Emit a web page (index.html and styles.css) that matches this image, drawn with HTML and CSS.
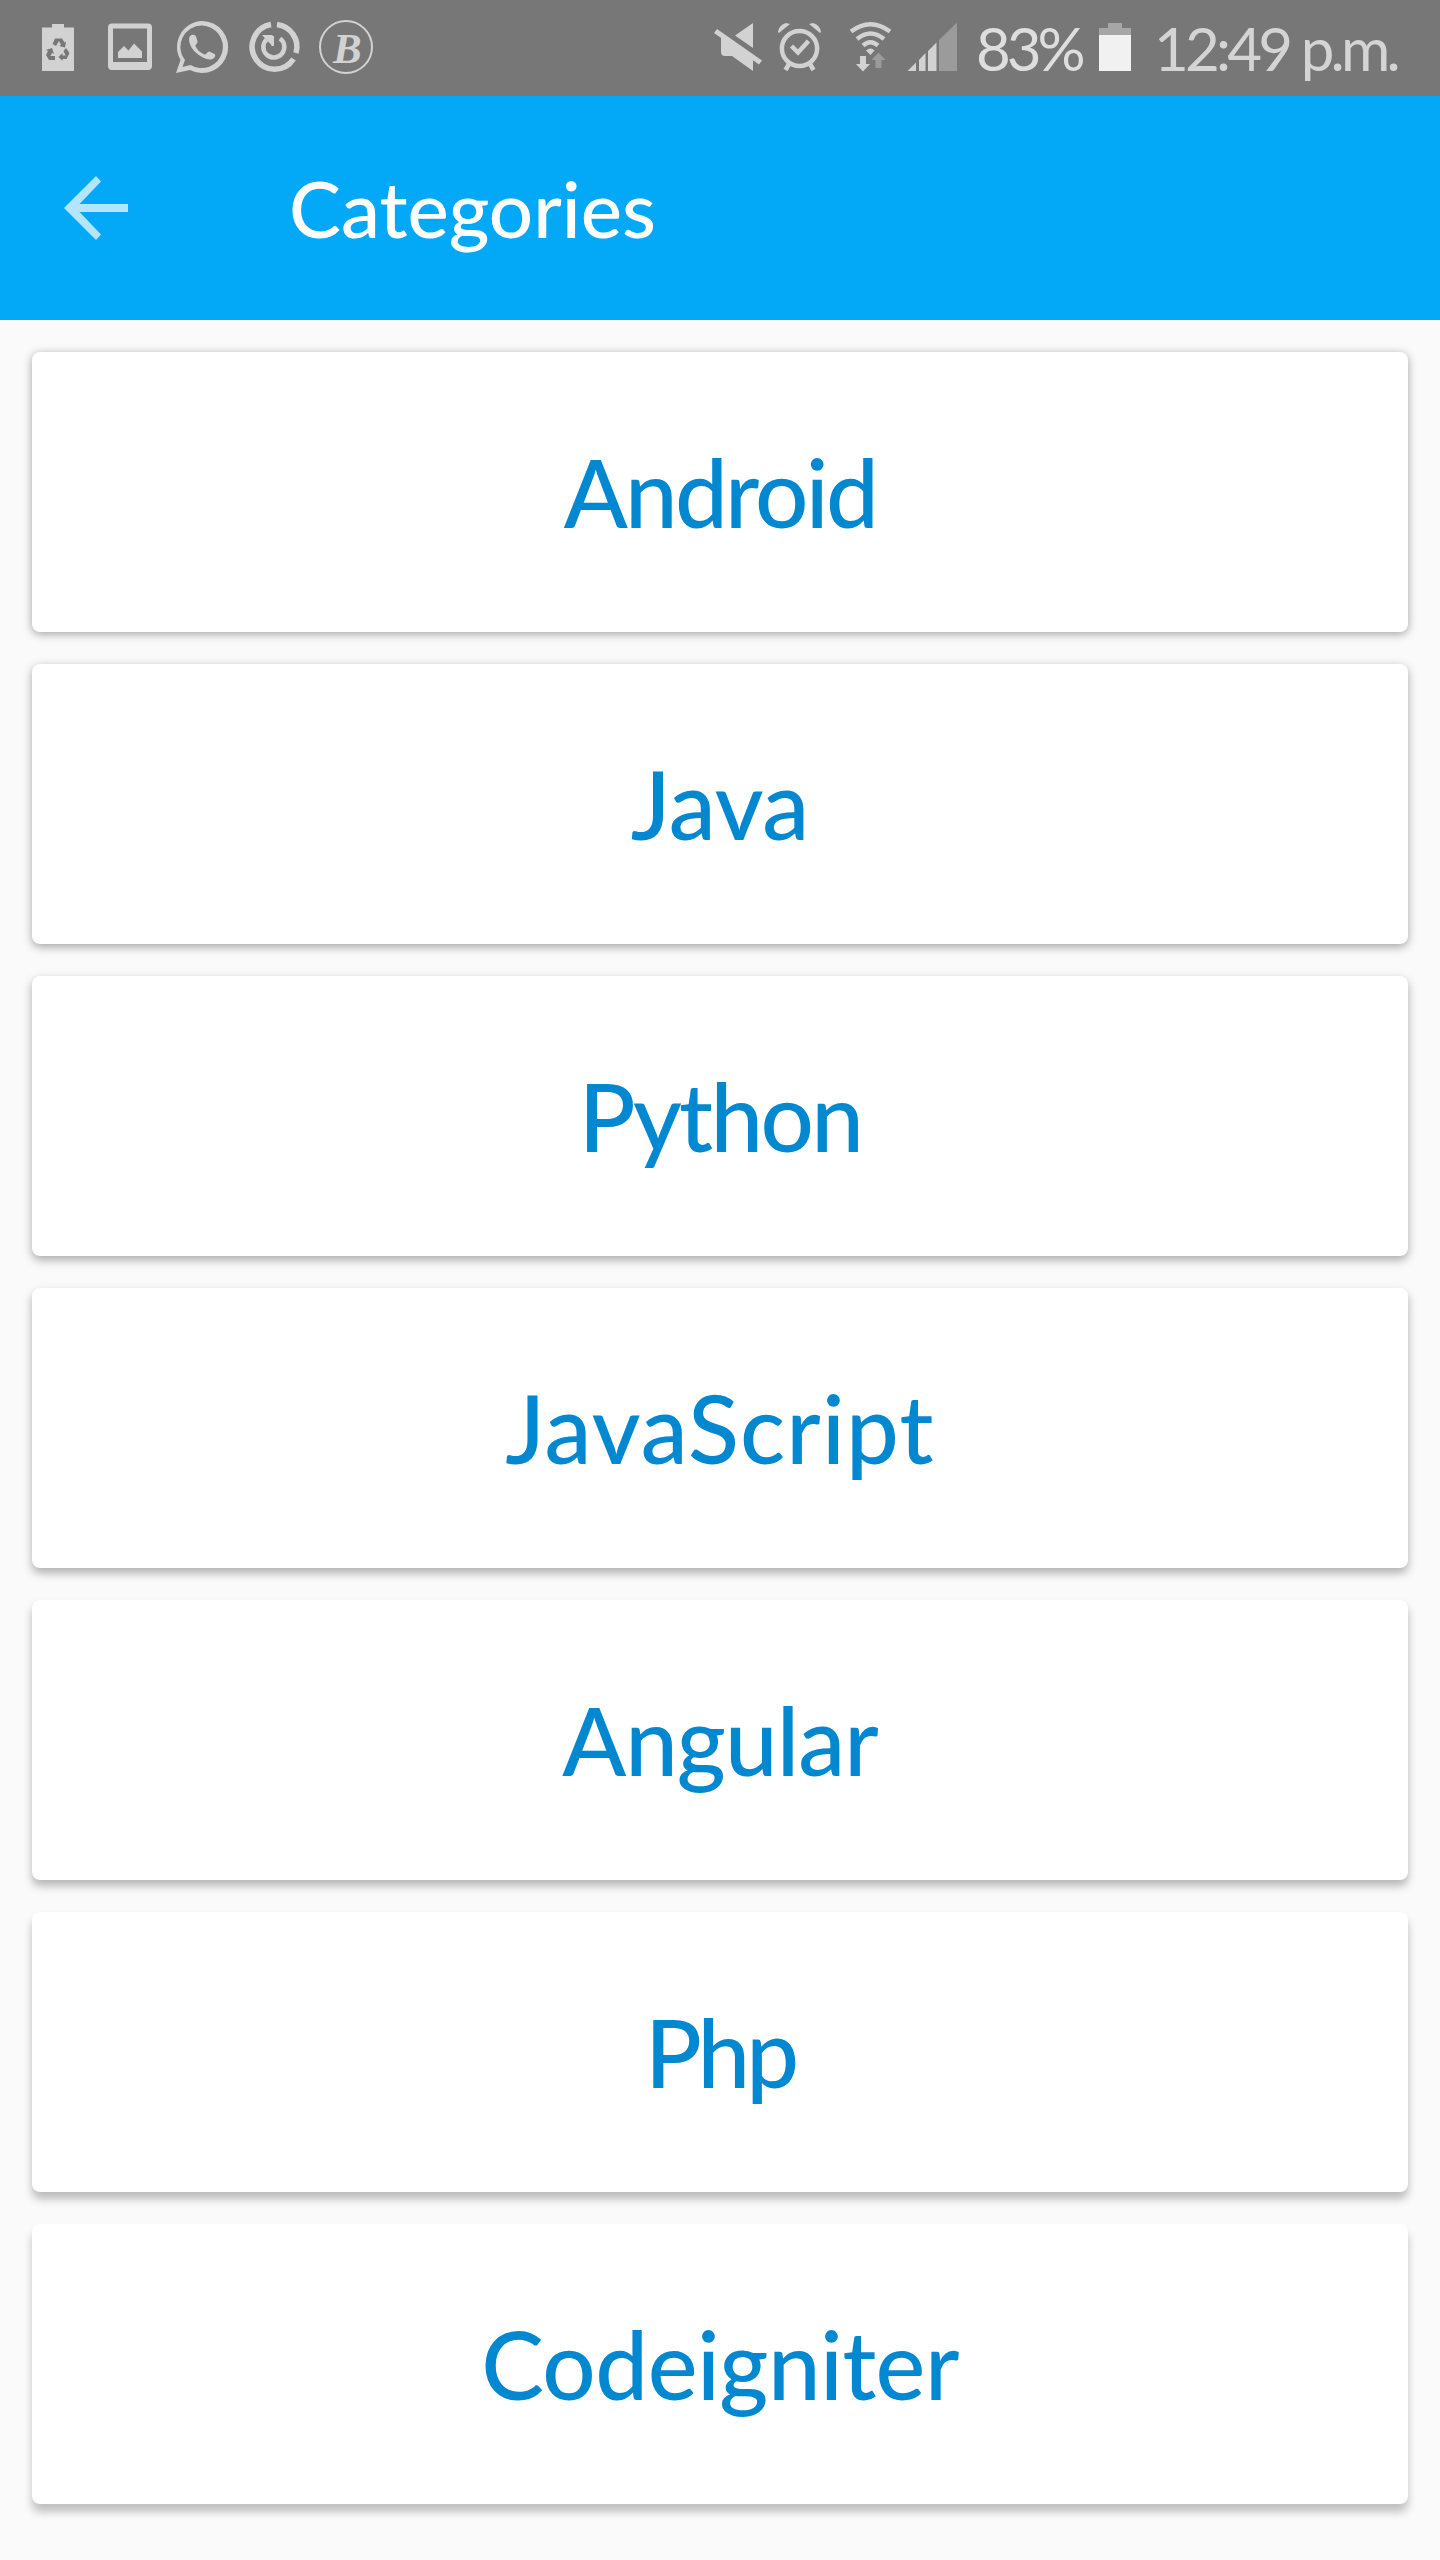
FILE: index.html
```html
<!DOCTYPE html>
<html lang="en">
<head>
<meta charset="utf-8">
<title>Categories</title>
<link rel="stylesheet" href="styles.css">
</head>
<body>
<div class="status-bar">
  <div class="status-group">
    <svg class="icon" width="65" height="96" viewBox="30 0 65 96">
      <path d="M42 27.500h10V24h12v3.500h10V71H42z"/>
      <g class="cut">
        <path d="M52.500 44 55 38.500h7l2.500 4 1.500-1-1 6-6-1.500 2-1-2-4-3 5z"/>
        <path d="M66 48l3.500 5-3 6h-4v2l-4-4 4-4v2.500h3l-2-4.500z"/>
        <path d="M46 50l6-2 2 6-2-1-1.500 3H55v4h-6l-3-5 2-4z"/>
      </g>
    </svg>
    <svg class="icon" width="70" height="96" viewBox="95 0 70 96">
      <path fill-rule="evenodd" d="M112 23.500h36a4 4 0 0 1 4 4V66a4 4 0 0 1-4 4h-36a4 4 0 0 1-4-4V27.500a4 4 0 0 1 4-4zM113 28.500V62h34V28.500zM118 58v-6l6-6 4.500 4.500L134 43.500l8 8V58z"/>
    </svg>
    <svg class="icon" width="75" height="96" viewBox="165 0 75 96">
      <path fill-rule="evenodd" d="M202 21a26 26 0 1 1-12 49l-14 3 4.500-13A26 26 0 0 1 202 21zM202 25.500a21.300 21.300 0 0 0-17 34.500l-2.500 7 8-2A21.300 21.300 0 1 0 202 25.500z"/>
      <path d="M190 36c2-1.500 5-2 6 .500l1.500 5c.500 2-2.500 3-2 4.500 1.500 4 5 7 9 8.500 2 .500 3-3.500 5-3l5 2.500c1.500 1 .500 3-.500 4-3 2.500-7 1.500-11-.500-7-3.500-12-9-13.500-15-.700-3-.500-5 .500-6.500z"/>
    </svg>
    <svg class="icon" width="70" height="96" viewBox="240 0 70 96">
      <path class="line w5" d="M271 24.500A22.500 22.500 0 1 0 293.500 59"/>
      <path class="line w5" d="M277 24.500A22.500 22.500 0 0 1 296 53"/>
      <path class="line w4" d="M266.500 39.500A10.500 10.500 0 1 0 280 38.500"/>
      <path d="M262 35h10.500v11l-4-4z"/>
      <path d="M271.500 36h2.500v10h-2.500z"/>
    </svg>
    <svg class="icon" width="72" height="96" viewBox="310 0 72 96">
      <circle class="line w2" cx="346" cy="47" r="26"/>
      <text class="brand" x="333" y="62.500">B</text>
    </svg>
  </div>
  <div class="status-group">
    <svg class="icon" width="62" height="96" viewBox="708 0 62 96">
      <path d="M753 23v25l-18-12.500zM721 38l8 4 24 16v13L732 56h-7q-4 0-4-4zM717 29l45 31.500-3 4L714 33z"/>
    </svg>
    <svg class="icon" width="62" height="96" viewBox="770 0 62 96">
      <circle class="line w4" cx="799.500" cy="48.500" r="17.600"/>
      <path class="line w4" d="M791.500 46l6.500 6.500L808.500 41M789 64l-3.500 6M810 64l3.500 6"/>
      <path d="M778 32q1-7 8-9l4 1-11 9zM821 32q-1-7-8-9l-4 1 11 9z"/>
    </svg>
    <svg class="icon" width="68" height="96" viewBox="832 0 68 96">
      <path class="line w4" d="M851 31.500q19.500-14.500 39 0M857 39q13.500-11 27 0M863 45.500q7.500-6.500 15 0"/>
      <path d="M866 50.500q4.500-4 8.500 0L870.500 55zM860 56h6v8h4l-7 7.500-7-7.500h4z"/>
      <path class="dim" d="M875.500 68h6v-8h4l-7-7.500-7 7.500h4z"/>
    </svg>
    <svg class="icon" width="72" height="96" viewBox="900 0 72 96">
      <path d="M907.500 71l8.500-8.500V71zM919 71V60l6.500-7v18zM928 71V51l8.500-8.500V71z"/>
      <path class="dim" d="M939 71V40l18-17.500V71z"/>
    </svg>
    <span class="percent">83%</span>
    <svg class="icon" width="58" height="96" viewBox="1090 0 58 96">
      <path class="dimmer" d="M1099 35v-7h9v-5h14v5h9v7z"/>
      <path class="charge" d="M1099 35h32v36h-32z"/>
    </svg>
    <span class="clock">12:49 p.m.</span>
  </div>
</div>
<header class="app-bar">
  <svg class="back" width="64" height="64" viewBox="0 0 64 64"><path d="M64 28H15.500L37 5.500 32 0 0 32l32 32 5-5.500L15.500 36H64z"/></svg>
  <h1 class="title">Categories</h1>
</header>
<main class="list">
  <div class="card"><span class="label android">Android</span></div>
  <div class="card"><span class="label">Java</span></div>
  <div class="card"><span class="label python">Python</span></div>
  <div class="card"><span class="label javascript">JavaScript</span></div>
  <div class="card"><span class="label angular">Angular</span></div>
  <div class="card"><span class="label php">Php</span></div>
  <div class="card"><span class="label codeigniter">Codeigniter</span></div>
</main>
</body>
</html>
```
FILE: styles.css
```css
* { box-sizing: border-box; }
body {
  margin: 0;
  width: 1440px;
  height: 2560px;
  overflow: hidden;
  background: #fafafa;
  font-family: Lato, "Open Sans", sans-serif;
}
.status-bar {
  height: 96px;
  padding: 0 30px;
  background: #777;
  color: #d4d4d4;
  display: flex;
  justify-content: space-between;
}
.status-group { display: flex; align-items: center; }
.icon { display: block; fill: #d2d2d2; flex: none; }
.cut { fill: #777; }
.line { fill: none; stroke: #d2d2d2; }
.w2 { stroke-width: 2; }
.w4 { stroke-width: 4.500px; }
.w5 { stroke-width: 5.500px; }
.dim { fill: #9b9b9b; }
.dimmer { fill: #a6a6a6; }
.charge { fill: #f1f1f1; }
.brand { font: italic 900 43px "Liberation Serif", serif; }
.percent, .clock { font-size: 60px; line-height: 96px; white-space: nowrap; }
.percent { width: 118px; padding-left: 4px; color: #dedede; letter-spacing: -4px; }
.clock { width: 262px; padding-left: 6px; letter-spacing: -3.800px; }
.app-bar {
  height: 224px;
  padding-left: 64px;
  background: #03a9f7;
  display: flex;
  align-items: center;
  gap: 161px;
}
.back { fill: #b3e5fd; }
.title {
  margin: 0;
  color: #fff;
  font-size: 78px;
  font-weight: 500;
}
.list {
  padding: 32px;
  display: flex;
  flex-direction: column;
  gap: 32px;
}
.card {
  height: 280px;
  border-radius: 8px;
  background: #fff;
  box-shadow: 0 2px 10px rgba(0, 0, 0, .36);
  display: flex;
  align-items: center;
  justify-content: center;
}
.card:nth-child(2) { box-shadow: 0 3px 10px rgba(0, 0, 0, .34); }
.card:nth-child(3) { box-shadow: 0 4px 10px rgba(0, 0, 0, .32); }
.card:nth-child(4) { box-shadow: 0 5px 10px rgba(0, 0, 0, .3); }
.card:nth-child(5) { box-shadow: 0 6px 9px rgba(0, 0, 0, .27); }
.card:nth-child(6) { box-shadow: 0 7px 9px rgba(0, 0, 0, .25); }
.card:nth-child(7) { box-shadow: 0 8px 9px rgba(0, 0, 0, .23); }
.label {
  color: #0288d1;
  font-size: 94px;
  font-weight: 500;
  line-height: 120px;
}
.android { letter-spacing: -2.700px; }
.python { letter-spacing: -2.600px; }
.javascript { letter-spacing: 1.200px; }
.angular { letter-spacing: -.900px; }
.php { letter-spacing: -4px; }
.codeigniter { letter-spacing: -.500px; }
```
